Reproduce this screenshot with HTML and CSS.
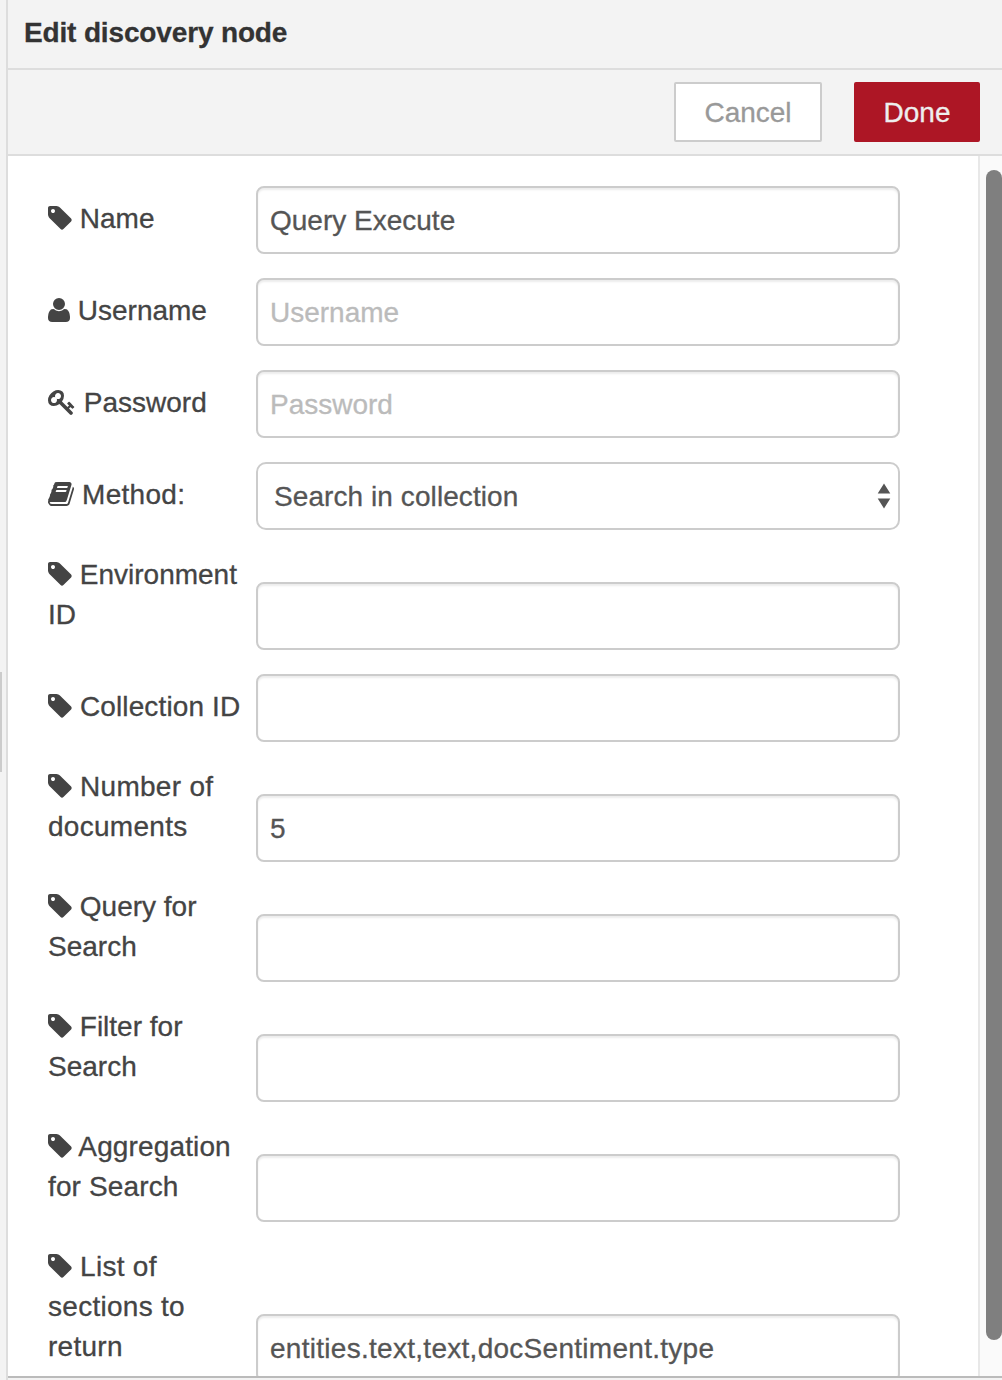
FILE: index.html
```html
<!DOCTYPE html>
<html lang="en">
<head>
<meta charset="utf-8">
<title>Edit discovery node</title>
<link rel="stylesheet" href="styles.css">
</head>
<body>
<svg class="sprite" aria-hidden="true">
  <symbol id="tag" viewBox="128 0 1536 1792"><path d="M576 448q0-53-37.500-90.500t-90.500-37.500-90.500 37.500-37.500 90.500 37.500 90.500 90.500 37.500 90.500-37.500 37.500-90.500zm1067 576q0 53-37 90l-491 492q-39 37-91 37-53 0-90-37l-715-716q-38-37-64.500-101t-26.500-117v-416q0-52 38-90t90-38h416q53 0 117 26.500t102 64.500l715 714q37 39 37 91z"/></symbol>
  <symbol id="user" viewBox="192 0 1408 1792"><path d="M1600 1405q0 120-73 189.500t-194 69.500h-874q-121 0-194-69.500t-73-189.500q0-53 3.500-103.500t14-109 26.500-108.500 43-97.500 62-81 85.500-53.500 111.500-20q9 0 42 21.500t74.500 48 108 48 133.500 21.500 133.500-21.500 108-48 74.500-48 42-21.500q61 0 111.500 20t85.500 53.500 62 81 43 97.500 26.500 108.500 14 109 3.500 103.500zm-320-893q0 159-112.500 271.500t-271.500 112.500-271.500-112.500-112.500-271.500 112.500-271.500 271.500-112.500 271.500 112.500 112.500 271.500z"/></symbol>
  <symbol id="key" viewBox="0 0 1792 1792"><path d="M832 512q0-80-56-136t-136-56-136 56-56 136q0 42 19 83-41-19-83-19-80 0-136 56t-56 136 56 136 136 56 136-56 56-136q0-42-19-83 41 19 83 19 80 0 136-56t56-136zm851 704q0 17-49 66t-66 49q-9 0-28.500-16t-36.500-33-38.500-40-24.500-26l-96 96 220 220q28 28 28 68 0 42-39 81t-81 39q-40 0-68-28l-671-671q-176 131-365 131-163 0-265.500-102.500t-102.500-265.500q0-160 95-313t248-248 313-95q163 0 265.500 102.500t102.500 265.500q0 189-131 365l355 355 96-96q-3-3-26-24.500t-40-38.500-33-36.500-16-28.500q0-17 49-66t66-49q13 0 23 10 6 6 46 44.500t82 79.500 86.500 86 73 78 28.500 41z"/></symbol>
  <symbol id="book" viewBox="64 0 1664 1792"><path d="M1703 478q40 57 18 129l-275 906q-19 64-76.500 107.500t-122.500 43.500h-923q-77 0-148.500-53.500t-99.500-131.500q-24-67-2-127 0-4 3-27t4-37q1-8-3-21.500t-3-19.500q2-11 8-21t16.500-23.500 16.500-23.500q23-38 45-91.500t30-91.500q3-10 .5-30t-.5-28q3-11 17-28t17-23q21-36 42-92t25-90q1-9-2.500-32t.5-28q4-13 22-30.500t22-22.500q19-26 42.500-84.500t27.500-96.500q1-8-3-25.500t-2-26.500q2-8 9-18t18-23 17-21q8-12 16.500-30.500t15-35 16-36 19.500-32 26.500-23.500 36-11.500 47.500 5.500l-1 3q38-9 51-9h761q74 0 114 56t18 130l-274 906q-36 119-71.500 153.500t-128.500 34.500h-869q-27 0-38 15-11 16-1 43 24 70 144 70h923q29 0 56-15.500t35-41.500l300-987q7-22 5-57 38 15 59 43zm-1064 2q-4 13 2 22.500t20 9.500h608q13 0 25.500-9.500t16.500-22.500l21-64q4-13-2-22.500t-20-9.500h-608q-13 0-25.500 9.500t-16.500 22.500zm-83 256q-4 13 2 22.500t20 9.500h608q13 0 25.500-9.500t16.500-22.500l21-64q4-13-2-22.500t-20-9.500h-608q-13 0-25.500 9.500t-16.500 22.500z"/></symbol>
</svg>
<div class="app">
  <div class="gutter"><span class="handle"></span></div>
  <main class="tray">
    <header class="title">Edit discovery node</header>
    <div class="toolbar">
      <button class="btn">Cancel</button>
      <button class="btn primary">Done</button>
    </div>
    <div class="body">
      <form class="form">
        <div class="row"><label for="f1"><svg class="icon tag"><use href="#tag"/></svg> Name</label><input id="f1" value="Query Execute"></div>
        <div class="row"><label for="f2"><svg class="icon user"><use href="#user"/></svg> Username</label><input id="f2" placeholder="Username"></div>
        <div class="row"><label for="f3"><svg class="icon key"><use href="#key"/></svg> Password</label><input id="f3" placeholder="Password"></div>
        <div class="row"><label class="loose"><svg class="icon book"><use href="#book"/></svg> Method:</label>
          <div class="select"><span>Search in collection</span><svg class="arrows" viewBox="0 0 14 26"><path d="M7 0.500 13.300 10.500H.7zM7 25.500 13.300 15.500H.7z"/></svg></div></div>
        <div class="row"><label for="f5"><svg class="icon tag"><use href="#tag"/></svg> Environment ID</label><input id="f5"></div>
        <div class="row"><label for="f6" class="relaxed"><svg class="icon tag"><use href="#tag"/></svg> Collection ID</label><input id="f6"></div>
        <div class="row"><label for="f7" class="loose"><svg class="icon tag"><use href="#tag"/></svg> Number of documents</label><input id="f7" value="5"></div>
        <div class="row"><label for="f8"><svg class="icon tag"><use href="#tag"/></svg> Query for Search</label><input id="f8"></div>
        <div class="row"><label for="f9"><svg class="icon tag"><use href="#tag"/></svg> Filter for Search</label><input id="f9"></div>
        <div class="row"><label for="f10" class="relaxed"><svg class="icon tag"><use href="#tag"/></svg> Aggregation for Search</label><input id="f10"></div>
        <div class="row"><label for="f11" class="loose"><svg class="icon tag"><use href="#tag"/></svg> List of sections to return</label><input id="f11" class="loose" value="entities.text,text,docSentiment.type"></div>
      </form>
      <div class="scrollbar"><div class="thumb"></div></div>
    </div>
    <footer class="footer"></footer>
  </main>
</div>
</body>
</html>
```

FILE: styles.css
```css
* { box-sizing: border-box; }

body {
  margin: 0;
  overflow: hidden;
  font: 28px/40px "Liberation Sans", Arial, sans-serif;
  color: #444;
  -webkit-text-stroke: 0.3px;
}

.sprite {
  display: none;
}

.app {
  display: flex;
  height: 1380px;
}

.gutter {
  width: 8px;
  padding-top: 672px;
  background: #f3f3f3;
  border-right: 2px solid #ddd;
}

.handle {
  display: block;
  width: 2px;
  height: 100px;
  background: #ccc;
}

.tray {
  flex: 1;
  display: flex;
  flex-direction: column;
  min-width: 0;
}

.title {
  flex: none;
  height: 70px;
  padding: 13px 16px 0;
  background: #f3f3f3;
  border-bottom: 2px solid #ddd;
  color: #333;
  font-weight: bold;
  letter-spacing: -0.15px;
}

.toolbar {
  flex: none;
  display: flex;
  justify-content: flex-end;
  align-items: center;
  gap: 32px;
  height: 86px;
  padding-right: 22px;
  background: #f3f3f3;
  border-bottom: 2px solid #ddd;
}

.btn {
  width: 148px;
  height: 60px;
  padding: 2px 0 0;
  border: 2px solid #ccc;
  border-radius: 2px;
  background: #fff;
  color: #999;
  font: inherit;
}

.btn.primary {
  width: 126px;
  border-color: #ad1625;
  background: #ad1625;
  color: #eee;
}

.body {
  flex: 1;
  display: flex;
  min-height: 0;
  overflow: hidden;
  background: #fff;
}

.form {
  flex: 1;
  display: flex;
  flex-direction: column;
  gap: 24px;
  padding: 30px 78px 0 40px;
}

.row {
  flex: none;
  display: flex;
  align-items: flex-end;
  gap: 8px;
}

.row label {
  width: 200px;
  padding: 1px 0 15px;
}

.row .relaxed { letter-spacing: 0.13px; }
.row .loose { letter-spacing: 0.28px; }

.icon {
  height: 28px;
  vertical-align: -4px;
  fill: #444;
  stroke: none;
}

.tag { width: 24px; }
.user { width: 22px; }
.key { width: 28px; }
.book { width: 26px; }

.row input,
.select {
  flex: 1;
  min-width: 0;
  height: 68px;
  padding: 2px 12px 0;
  border: 2px solid #ccc;
  border-radius: 8px;
  background: #fff;
  color: #555;
  font: inherit;
}

.row input {
  box-shadow: inset 0 2px 2px rgba(0, 0, 0, 0.075);
}

.row input::placeholder {
  color: #bbb;
}

.select {
  display: flex;
  align-items: center;
  justify-content: space-between;
  padding: 0 7px 0 16px;
  border-radius: 10px;
  letter-spacing: 0.08px;
}

.select span {
  padding-top: 2px;
}

.arrows {
  width: 14px;
  height: 26px;
  fill: #555;
}

.scrollbar {
  width: 24px;
  padding: 14px 0 0 6px;
  border-left: 2px solid #e8e8e8;
  background: #fafafa;
}

.thumb {
  height: 1170px;
  border-radius: 8px;
  background: #7f7f7f;
}

.footer {
  flex: none;
  height: 4px;
  border-top: 2px solid #bbb;
  background: #f3f3f3;
}
```
